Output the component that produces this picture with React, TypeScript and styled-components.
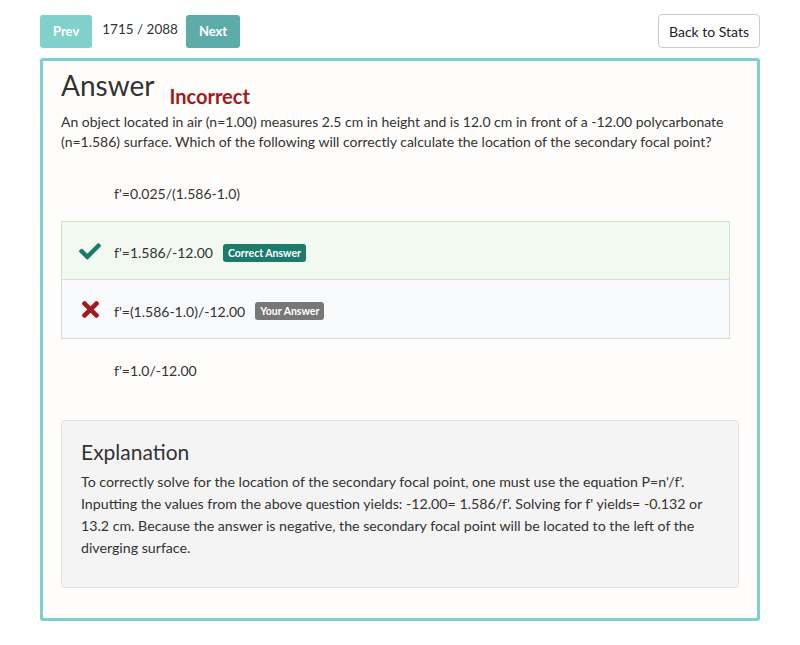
import React from "react";
import styled, { createGlobalStyle } from "styled-components";

const Global = createGlobalStyle`
  body { margin: 0; background: #ffffff; font-family: Lato, "Open Sans", sans-serif; color: #333; }
  * { box-sizing: border-box; }
`;

const Page = styled.div`
  padding: 14px 40px 24px 40px;
`;

const TopBar = styled.div`
  display: flex;
  align-items: center;
  height: 34px;
`;

const NavButton = styled.button<{ $dark?: boolean }>`
  height: 33px;
  padding: 0 13px;
  border: none;
  border-radius: 3px;
  background: ${(p) => (p.$dark ? "#5eaca9" : "#80d0cc")};
  color: #fff;
  font-family: Lato, sans-serif;
  font-weight: 700;
  font-size: 13px;
`;

const Counter = styled.span`
  font-size: 13.5px;
  color: #333;
  margin: -4px 8px 0 10px;
`;

const Spacer = styled.div`
  flex: 1;
`;

const BackButton = styled.button`
  height: 34px;
  width: 102px;
  border: 1px solid #ccc;
  border-radius: 4px;
  background: #fff;
  color: #222;
  font-family: Lato, sans-serif;
  font-size: 14px;
`;

const Card = styled.div`
  margin-top: 10px;
  border: 3px solid #7fcfcc;
  border-radius: 3px;
  background: #fefdfb;
  padding: 6px 18px 30px 18px;
`;

const HeaderRow = styled.div`
  display: flex;
  align-items: flex-start;
  height: 45px;
`;

const Title = styled.h1`
  margin: 0;
  font-size: 28px;
  line-height: 36px;
  font-weight: 400;
  color: #333;
`;

const Status = styled.span`
  margin: 16px 0 0 15px;
  font-size: 20px;
  line-height: 26px;
  font-weight: 700;
  color: #a01b1b;
`;

const Question = styled.p`
  margin: 0;
  font-size: 14px;
  line-height: 20px;
  color: #333;
`;

const Options = styled.div`
  margin: 10px 9px 0 0;
  display: flex;
  flex-direction: column;
`;

const OptionRow = styled.div<{ $kind?: "correct" | "wrong" }>`
  display: flex;
  align-items: center;
  height: 59px;
  padding: 4px 0 0 17px;
  border: 1px solid
    ${(p) => (p.$kind === "correct" ? "#cfe3c8" : p.$kind === "wrong" ? "#dcdcdc" : "transparent")};
  border-top-width: ${(p) => (p.$kind === "wrong" ? "0" : "1px")};
  background: ${(p) => (p.$kind === "correct" ? "#f2f9f0" : p.$kind === "wrong" ? "#f8f9fa" : "transparent")};
  font-size: 14px;
  color: #333;
`;

const IconSlot = styled.span`
  width: 22px;
  height: 20px;
  margin-right: 13px;
  margin-top: -4px;
  display: flex;
  align-items: center;
  justify-content: center;
`;

const Badge = styled.span<{ $tone: "green" | "grey" }>`
  margin-left: 10px;
  padding: 3px 5px;
  border-radius: 3px;
  background: ${(p) => (p.$tone === "green" ? "#1b7c6c" : "#777777")};
  color: #fff;
  font-size: 10.5px;
  font-weight: 700;
  line-height: 12px;
`;

const Explanation = styled.div`
  margin-top: 22px;
  background: #f4f4f4;
  border: 1px solid #e2e2e2;
  border-radius: 4px;
  padding: 18px 20px 28px 19px;
`;

const ExplTitle = styled.h2`
  margin: 0 0 6px 0;
  font-size: 21px;
  line-height: 26px;
  font-weight: 400;
  color: #333;
`;

const ExplText = styled.p`
  margin: 0;
  font-size: 14.2px;
  line-height: 22px;
  color: #333;
`;

const Check = () => (
  <svg width="22" height="18" viewBox="0 0 512 410">
    <path
      fill="#1a7a6c"
      d="M173.9 397.4L7.5 231c-10-10-10-26.2 0-36.2l36.2-36.2c10-10 26.2-10 36.2 0L192 270.7 432.1 30.6c10-10 26.2-10 36.2 0l36.2 36.2c10 10 10 26.2 0 36.2L210.1 397.4c-10 10-26.2 10-36.2 0z"
    />
  </svg>
);

const Cross = () => (
  <svg width="17" height="17" viewBox="0 0 352 352">
    <path
      fill="#a01c1c"
      d="M242.7 176l100-100c12.3-12.3 12.3-32.2 0-44.5l-22.2-22.2c-12.3-12.3-32.2-12.3-44.5 0L176 109.3 76 9.3C63.7-3 43.8-3 31.5 9.3L9.3 31.5C-3 43.8-3 63.7 9.3 76l100 100-100 100c-12.3 12.3-12.3 32.2 0 44.5l22.2 22.2c12.3 12.3 32.2 12.3 44.5 0l100-100 100 100c12.3 12.3 32.2 12.3 44.5 0l22.2-22.2c12.3-12.3 12.3-32.2 0-44.5L242.7 176z"
    />
  </svg>
);

export default function App() {
  return (
    <Page>
      <Global />
      <TopBar>
        <NavButton>Prev</NavButton>
        <Counter>1715 / 2088</Counter>
        <NavButton $dark>Next</NavButton>
        <Spacer />
        <BackButton>Back to Stats</BackButton>
      </TopBar>
      <Card>
        <HeaderRow>
          <Title>Answer</Title>
          <Status>Incorrect</Status>
        </HeaderRow>
        <Question>
          An object located in air (n=1.00) measures 2.5 cm in height and is 12.0 cm in front of a -12.00
          polycarbonate (n=1.586) surface. Which of the following will correctly calculate the location of the
          secondary focal point?
        </Question>
        <Options>
          <OptionRow>
            <IconSlot />
            f'=0.025/(1.586-1.0)
          </OptionRow>
          <OptionRow $kind="correct">
            <IconSlot>
              <Check />
            </IconSlot>
            f'=1.586/-12.00
            <Badge $tone="green">Correct Answer</Badge>
          </OptionRow>
          <OptionRow $kind="wrong">
            <IconSlot>
              <Cross />
            </IconSlot>
            f'=(1.586-1.0)/-12.00
            <Badge $tone="grey">Your Answer</Badge>
          </OptionRow>
          <OptionRow>
            <IconSlot />
            f'=1.0/-12.00
          </OptionRow>
        </Options>
        <Explanation>
          <ExplTitle>Explanation</ExplTitle>
          <ExplText>
            To correctly solve for the location of the secondary focal point, one must use the equation P=n'/f'.
            Inputting the values from the above question yields: -12.00= 1.586/f'. Solving for f' yields= -0.132 or
            13.2 cm. Because the answer is negative, the secondary focal point will be located to the left of the
            diverging surface.
          </ExplText>
        </Explanation>
      </Card>
    </Page>
  );
}
